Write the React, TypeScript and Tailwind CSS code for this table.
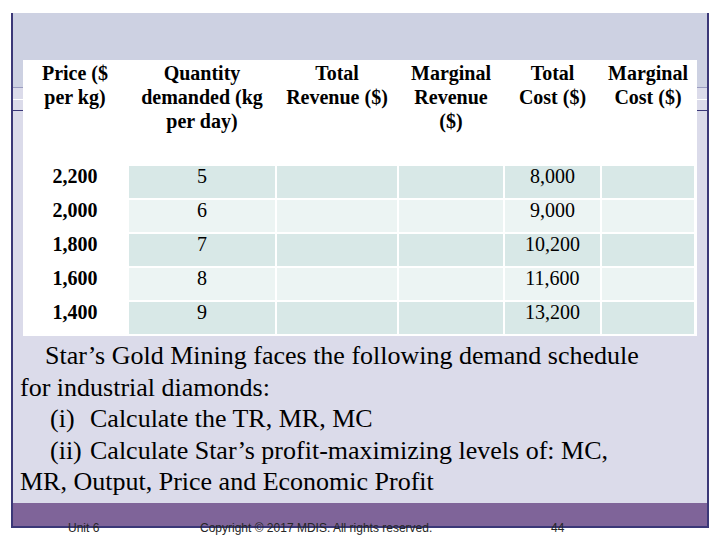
import React from 'react';

const headers: React.ReactNode[] = [
  <>Price ($<br />per kg)</>,
  <>Quantity<br />demanded (kg<br />per day)</>,
  <>Total<br />Revenue ($)</>,
  <>Marginal<br />Revenue<br />($)</>,
  <>Total<br />Cost ($)</>,
  <>Marginal<br />Cost ($)</>,
];

const rows = [
  { price: '2,200', qty: '5', tc: '8,000' },
  { price: '2,000', qty: '6', tc: '9,000' },
  { price: '1,800', qty: '7', tc: '10,200' },
  { price: '1,600', qty: '8', tc: '11,600' },
  { price: '1,400', qty: '9', tc: '13,200' },
];

const serif = { fontFamily: '"Liberation Serif", "Times New Roman", serif' };

export default function App() {
  return (
    <div className="min-h-[540px] w-[720px] bg-white overflow-hidden">
      <div className="ml-[11px] mt-[13px] w-[698px] border-x-2 border-b-2 border-[#3b3878]">
        <div className="bg-[linear-gradient(to_bottom,#cdd1e2_74px,#9a9cc0_74px,#9a9cc0_75px,#dbdbea_75px,#dbdbea_86px,#ffffff_86px,#ffffff_87px,#dbdbea_87px,#dbdbea_97px,#3b3878_97px,#3b3878_98px,#dbdbea_98px)] pt-[47px]">
          {/* table */}
          <div
            className="mx-[10px] grid grid-cols-[104px_146px_120px_104px_95px_92px] gap-[2px] bg-white pr-[3px] pb-[2px] text-black"
            style={serif}
          >
            {headers.map((h, i) => (
              <div key={i} className="h-[104px] pt-px text-center text-[20px] font-bold leading-[24px]">
                {h}
              </div>
            ))}
            {rows.map((r, i) => {
              const shade = i % 2 === 0 ? 'bg-[#d8e8e7]' : 'bg-[#ecf4f3]';
              return (
                <React.Fragment key={r.price}>
                  <div className="h-[32px] text-center text-[20px] font-bold leading-[21px]">{r.price}</div>
                  <div className={`h-[32px] text-center text-[20px] leading-[21px] ${shade}`}>{r.qty}</div>
                  <div className={`h-[32px] ${shade}`} />
                  <div className={`h-[32px] ${shade}`} />
                  <div className={`h-[32px] text-center text-[20px] leading-[21px] ${shade}`}>{r.tc}</div>
                  <div className={`h-[32px] ${shade}`} />
                </React.Fragment>
              );
            })}
          </div>

          {/* question text */}
          <div className="h-[167px] whitespace-nowrap pl-[7px] pt-[4px] text-[26px] leading-[31.5px] text-black" style={serif}>
            <p className="indent-[25px]">
              Star’s Gold Mining faces the following demand schedule
              <br />
              for industrial diamonds:
            </p>
            <p className="pl-[30px]">
              <span className="inline-block w-[40px]">(i)</span>Calculate the TR, MR, MC
            </p>
            <p className="indent-[30px]">
              <span className="inline-block w-[40px] indent-0">(ii)</span>Calculate Star’s profit-maximizing levels of: MC,
              <br />
              MR, Output, Price and Economic Profit
            </p>
          </div>
        </div>
        <div className="h-[23px] bg-[#7f6499]" />
      </div>

      {/* footer */}
      <div
        className="relative -mt-[7px] flex pl-[68px] text-[12px] leading-[14px] text-[#262626]"
        style={{ fontFamily: '"Liberation Sans", Arial, sans-serif' }}
      >
        <span className="w-[132px]">Unit 6</span>
        <span className="w-[351px]">Copyright © 2017 MDIS. All rights reserved.</span>
        <span>44</span>
      </div>
    </div>
  );
}
